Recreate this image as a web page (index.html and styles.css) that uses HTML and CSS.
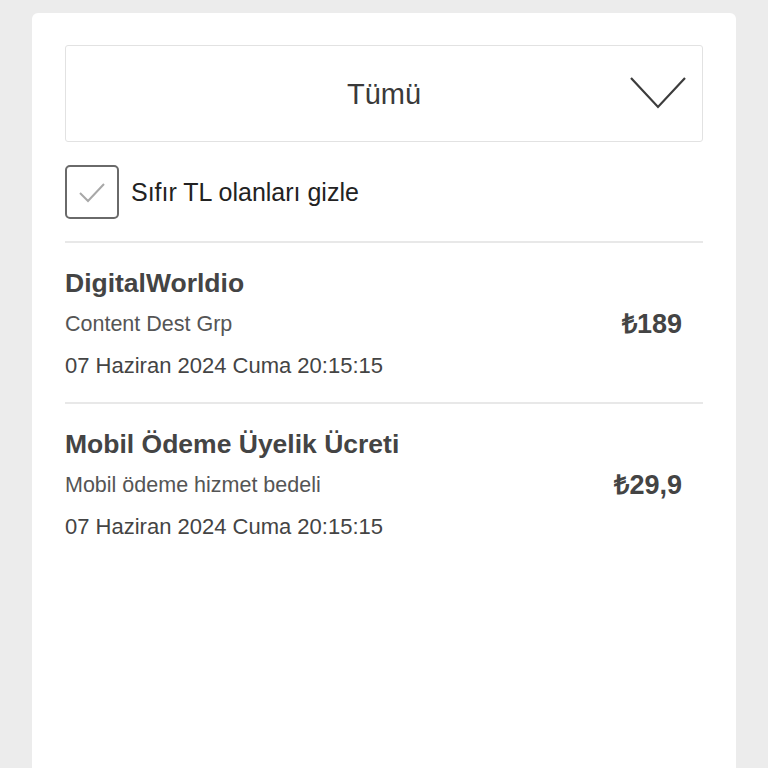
FILE: index.html
```html
<!DOCTYPE html>
<html lang="tr">
<head>
    <meta charset="UTF-8">
    <link rel="stylesheet" href="styles.css">
</head>
<body>
    <div class="card">
        <div class="select">
            <span class="select-value">Tümü</span>
            <svg class="chevron" width="56" height="32" viewBox="0 0 56 32">
                <polyline points="1,1 28,30 55,1" fill="none" stroke="#3c3c3c" stroke-width="2.2"/>
            </svg>
        </div>

        <label class="check-row">
            <span class="checkbox">
                <svg width="30" height="24" viewBox="0 0 30 24">
                    <polyline points="3,13 11,21 27,4" fill="none" stroke="#a8a8a8" stroke-width="2"/>
                </svg>
            </span>
            <span class="check-label">Sıfır TL olanları gizle</span>
        </label>

        <div class="list">
            <div class="item">
                <div class="item-info">
                    <div class="item-title">DigitalWorldio</div>
                    <div class="item-sub">Content Dest Grp</div>
                    <div class="item-date">07 Haziran 2024 Cuma 20:15:15</div>
                </div>
                <div class="item-price">₺189</div>
            </div>
            <div class="item">
                <div class="item-info">
                    <div class="item-title">Mobil Ödeme Üyelik Ücreti</div>
                    <div class="item-sub">Mobil ödeme hizmet bedeli</div>
                    <div class="item-date">07 Haziran 2024 Cuma 20:15:15</div>
                </div>
                <div class="item-price">₺29,9</div>
            </div>
        </div>
    </div>
</body>
</html>
```

FILE: styles.css
```css
body {
    margin: 0;
    height: 768px;
    overflow: hidden;
    background: #ececec;
    font-family: "Liberation Sans", Arial, sans-serif;
    color: #333;
}

.card {
    margin: 13px 32px 0;
    height: 755px;
    background: #fff;
    border-radius: 6px 6px 0 0;
    padding: 32px 33px 0;
}

.select {
    position: relative;
    height: 95px;
    border: 1px solid #e2e2e2;
    border-radius: 3px;
    display: flex;
    align-items: center;
    justify-content: center;
}

.select-value {
    font-size: 29px;
    color: #3a3a3a;
    margin-top: 2px;
}

.chevron {
    position: absolute;
    right: 16px;
    top: 31px;
}

.check-row {
    display: flex;
    align-items: center;
    gap: 12px;
    margin-top: 23px;
}

.checkbox {
    width: 50px;
    height: 50px;
    border: 2px solid #6a6a6a;
    border-radius: 5px;
    display: flex;
    align-items: center;
    justify-content: center;
}

.check-label {
    font-size: 25px;
    color: #222;
}

.list {
    margin-top: 22px;
}

.item {
    border-top: 2px solid #e8e8e8;
    padding: 20px 21px 17px 0;
    display: flex;
    align-items: center;
    justify-content: space-between;
}

.item-title {
    font-size: 26.5px;
    font-weight: bold;
    color: #444;
    line-height: 40px;
}

.item-sub {
    font-size: 21.5px;
    color: #555;
    line-height: 43px;
}

.item-date {
    font-size: 22px;
    color: #444;
    line-height: 39px;
}

.item-price {
    font-size: 27px;
    font-weight: bold;
    color: #444;
    margin-bottom: 4px;
}
```
